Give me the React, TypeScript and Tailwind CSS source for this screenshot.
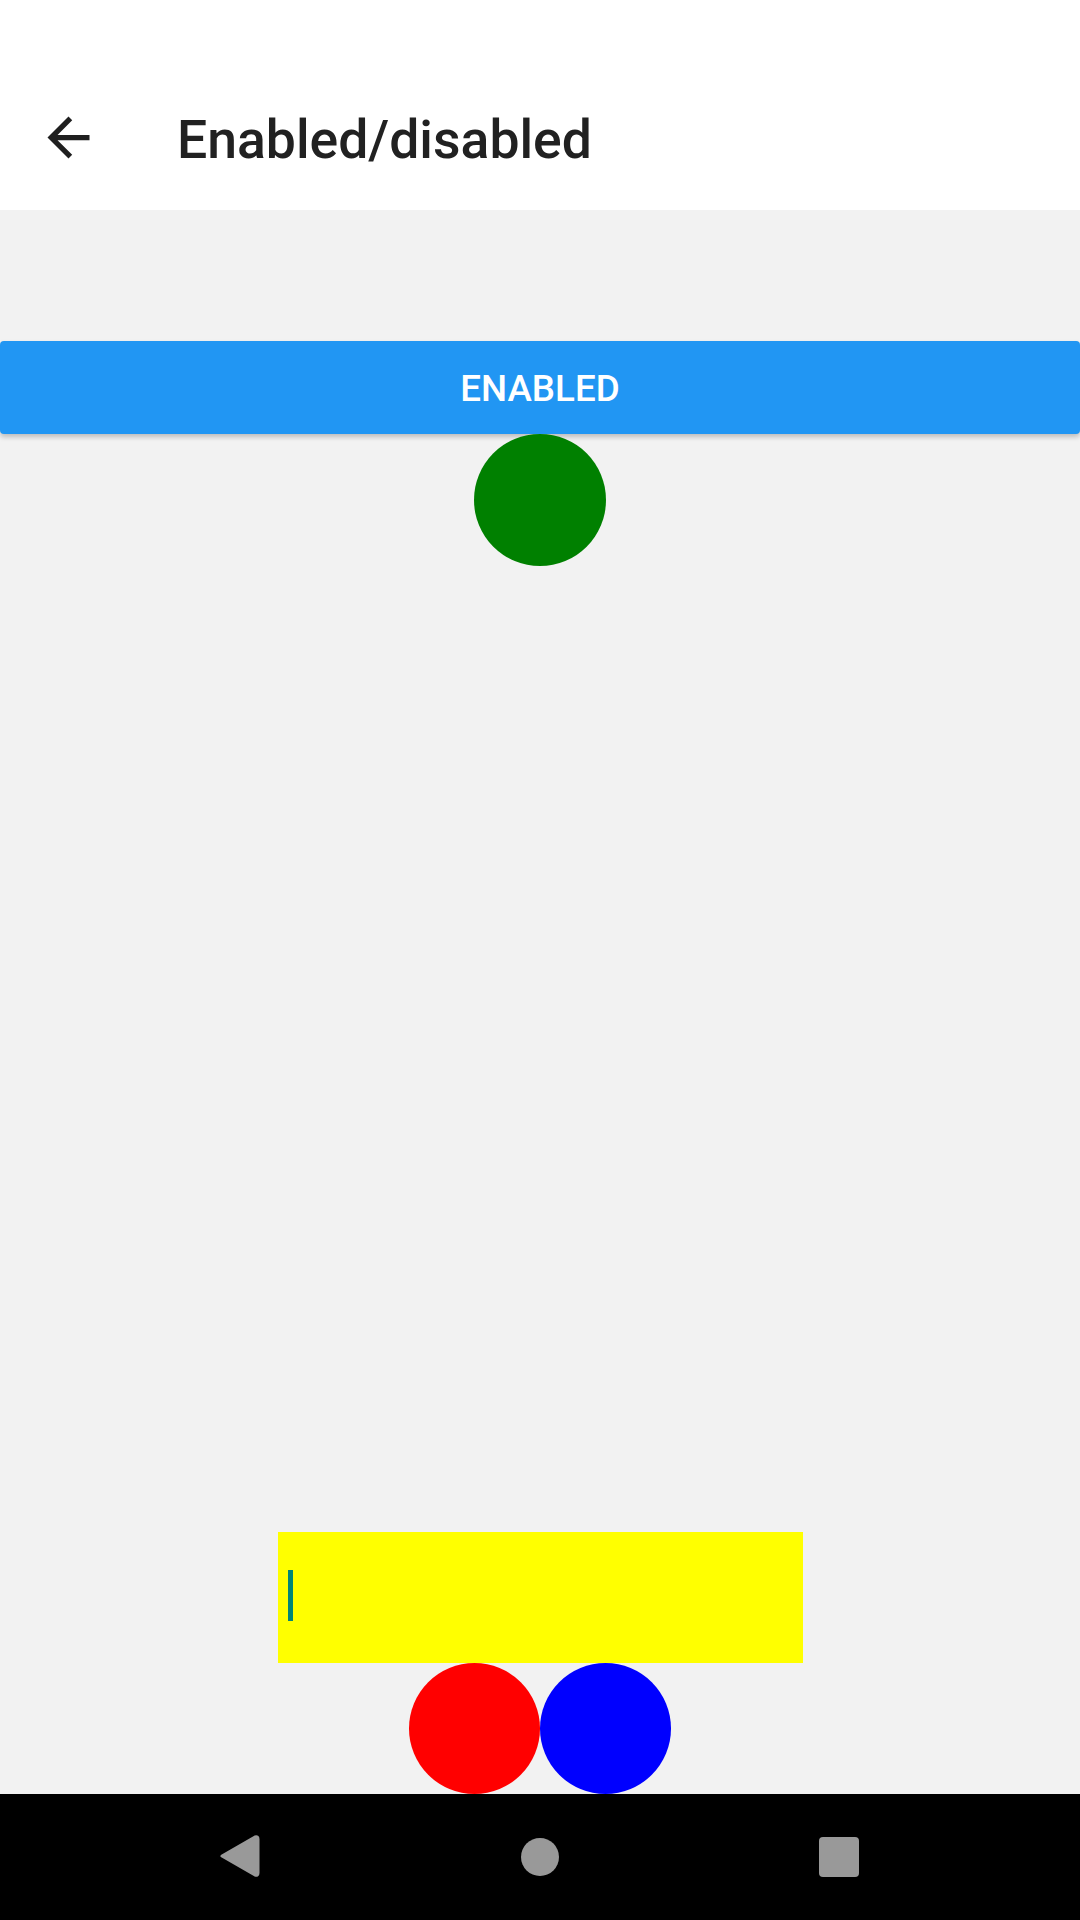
import React from "react";

export default function App() {
  return (
    <div
      className="w-[1080px] h-[1920px] flex flex-col bg-[#f2f2f2] overflow-hidden"
      style={{ fontFamily: "Roboto, 'Noto Sans', sans-serif" }}
    >
      <header className="h-[210px] bg-white flex flex-col shrink-0">
        <div className="h-[63px]" />
        <div className="h-[147px] flex items-center">
          <div className="w-[63px] h-[63px] ml-[37px] mt-[2px] flex items-center justify-center">
            <svg viewBox="0 0 24 24" width="63" height="63">
              <path
                d="M20 11H7.83l5.59-5.59L12 4l-8 8 8 8 1.41-1.41L7.83 13H20v-2z"
                fill="#1f1f1f"
              />
            </svg>
          </div>
          <h1 className="ml-[77px] mt-[6px] text-[53.5px] font-medium text-[#212121] leading-none tracking-normal">
            Enabled/disabled
          </h1>
        </div>
      </header>

      <main className="flex-1 flex flex-col items-center pt-[131px]">
        <button className="w-full h-[93px] pt-[4px] bg-[#2196F3] rounded-[4px] shadow-[0_3px_5px_rgba(0,0,0,0.22)] text-white text-[36.75px] font-medium leading-none flex items-center justify-center">
          ENABLED
        </button>
        <div className="w-[132px] h-[132px] rounded-full bg-[#008000]" />
        <div className="flex-1" />
        <div className="w-[525px] h-[131px] bg-[#ffff00] relative">
          <div className="absolute left-[10px] top-[38px] w-[5px] h-[51px] bg-[#008577]" />
        </div>
        <div className="flex">
          <div className="w-[131px] h-[131px] rounded-full bg-[#ff0000]" />
          <div className="w-[131px] h-[131px] rounded-full bg-[#0000ff]" />
        </div>
      </main>

      <nav className="h-[126px] bg-black shrink-0 relative flex items-center">
        <svg
          className="absolute left-[217px] top-[38px]"
          width="44"
          height="48"
          viewBox="0 0 44 48"
        >
          <path
            d="M5 24 L38 5 Q41 4 41 7 L41 41 Q41 44 38 43 Z"
            fill="#999999"
            stroke="#999999"
            strokeWidth="3"
            strokeLinejoin="round"
          />
        </svg>
        <div className="absolute left-[521px] top-[44px] w-[38px] h-[38px] rounded-full bg-[#999999]" />
        <div className="absolute left-[819px] top-[43px] w-[40px] h-[40px] rounded-[4px] bg-[#999999]" />
      </nav>
    </div>
  );
}
